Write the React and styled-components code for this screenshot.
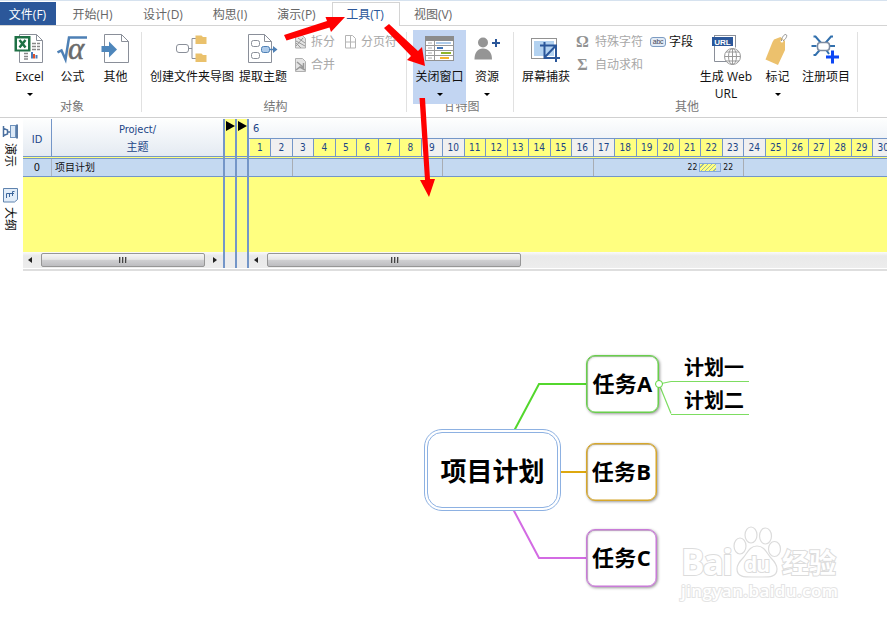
import React from 'react'
import styled, { createGlobalStyle, css } from 'styled-components'

const GlobalStyle = createGlobalStyle`
    * {
        box-sizing: border-box;
    }

    body {
        margin: 0;
        background: #fff;
        font: 12px/16px "Open Sans", "Noto Sans CJK SC", sans-serif;
        overflow: hidden;
    }
`

const blue = '#7496c8'
const yellow = '#ffff80'
const navy = '#1c4587'

const Window = styled.div`
    position: relative;
    width: 887px;
    height: 622px;
    display: flex;
    flex-direction: column;
    overflow: hidden;
    background: #fff;
`

/* ---------- ribbon tabs ---------- */

const TabBar = styled.div`
    display: flex;
    flex: none;
    height: 26px;
    padding-top: 2px;
    background: linear-gradient(#d6e2ef 1px, #fff 1px);
    border-bottom: 1px solid #d4d4d4;
`

const Tab = styled.div`
    width: ${({ $width }) => $width}px;
    height: 24px;
    padding-right: 1px;
    line-height: 25px;
    text-align: center;
    color: #666;

    ${({ $file }) => $file && css`
        height: 23px;
        margin-right: 2px;
        background: #2b579a;
        color: #fff;
    `}

    ${({ $active }) => $active && css`
        padding-right: 2px;
        line-height: 23px;
        background: #fff;
        border: 1px solid #d4d4d4;
        border-bottom: none;
        color: #2b579a;
    `}
`

/* ---------- ribbon ---------- */

const RibbonBar = styled.div`
    display: flex;
    flex: none;
    height: 92px;
    border-bottom: 1px solid #d0d0d0;
`

const Group = styled.div`
    display: flex;
    flex-direction: column;
    width: ${({ $width }) => $width}px;
    margin: 4px 0 3px;
    background: linear-gradient(#e1e1e1, #e1e1e1) right 2px / 1px 80px no-repeat;
`

const GroupItems = styled.div`
    display: flex;
    height: 74px;
    padding-left: ${({ $left }) => $left}px;
`

const GroupCaption = styled.div`
    height: 10px;
    padding-left: 2px;
    line-height: 5px;
    text-align: center;
    color: #777;
`

const BigButton = styled.div`
    position: relative;
    z-index: 1;
    display: flex;
    flex-direction: column;
    align-items: center;
    flex: none;
    width: ${({ $width }) => $width}px;
    height: 74px;
    padding-top: 3px;
    color: #111;
    text-align: center;
    background: ${({ $pressed }) => ($pressed ? '#c2d5f2' : 'transparent')};

    svg {
        flex: none;
    }
`

const ButtonLabel = styled.div`
    margin-top: 3px;
    line-height: 17px;
    white-space: pre;
`

const Caret = styled.div`
    margin-top: 8px;
    border: 3px solid transparent;
    border-top-color: #000;
    border-bottom: none;
`

const SmallColumn = styled.div`
    display: flex;
    flex-direction: column;
    flex: none;
    width: ${({ $width }) => $width}px;
    padding-left: ${({ $left = 0 }) => $left}px;
`

const SmallButton = styled.div`
    display: flex;
    align-items: center;
    gap: ${({ $gap = 3 }) => $gap}px;
    height: 23px;
    white-space: nowrap;
    color: ${({ $enabled }) => ($enabled ? '#111' : '#a8a8a8')};

    svg {
        flex: none;
    }
`

const Icon = ({ w = 32, h = 32, children }) => (
    <svg width={ w } height={ h } viewBox={ `0 0 ${w} ${h}` } fill="none">{ children }</svg>
)

const ExcelIcon = () => (
    <Icon>
        <path d="M5.500 1.500h17l6 6v22h-23z" fill="#fff" stroke="#8a8f99" />
        <path d="M22.500 1.500v6h6" stroke="#8a8f99" />
        <path d="M18 10.500h4M18 13.500h4M18 16.500h4M23 10.500h3M23 13.500h3M23 16.500h3M10 20.500h4M10 23.500h4M10 26h4" stroke="#888" strokeWidth="1.500" />
        <path d="M18 19v6.500" stroke="#4a7ebb" strokeWidth="2" />
        <path d="M20 21v4.500" stroke="#e0532c" strokeWidth="2" />
        <path d="M22.500 22v3.500" stroke="#4a7ebb" strokeWidth="2" />
        <rect x=".5" y="3" width="16" height="15.500" fill="#1e7145" />
        <rect x="3" y="5.500" width="11" height="11" fill="#fff" />
        <path d="M5.500 7l6 7.500M11.500 7l-6 7.500" stroke="#1e7145" strokeWidth="2.500" />
    </Icon>
)

const Radical = styled.svg`
    text {
        font: italic 31px "Liberation Serif", serif;
        fill: #6b6b6b;
        stroke: #6b6b6b;
        stroke-width: .5px;
    }
`

const FormulaIcon = () => (
    <Radical width="32" height="32" fill="none">
        <path d="M.5 19.500l4-2 4 9L12 4.500h18" stroke="#4e80b5" strokeWidth="2.500" />
        <text x="11" y="26">α</text>
    </Radical>
)

const OtherIcon = () => (
    <Icon>
        <path d="M4.500 1.500h17l7 7v21h-24z" fill="#fff" stroke="#8a8f99" />
        <path d="M21.500 1.500v7h7" stroke="#8a8f99" />
        <path d="M1.500 13H9V8.500l8 8-8 8V19H1.500z" fill="#4e86bb" />
    </Icon>
)

const FolderMapIcon = () => (
    <Icon>
        <rect x=".5" y="11.500" width="12" height="8" rx="2.500" stroke="#8a8f99" />
        <path d="M13 15.500h3M20 5.500h-4v20h4" stroke="#8a8f99" />
        <path d="M19.500 2.500h6l1.500 1.500h3.500v7h-11z" fill="#eac16c" />
        <path d="M19.500 20.500h6l1.500 1.500h3.500v7h-11z" fill="#eac16c" />
    </Icon>
)

const ExtractIcon = () => (
    <Icon>
        <path d="M1.500 1.500h16l7 7v21h-23z" fill="#fff" stroke="#8a8f99" />
        <path d="M17.500 1.500v7h7" stroke="#8a8f99" />
        <rect x="4.500" y="7.500" width="8" height="6" rx="2" stroke="#8a8f99" />
        <rect x="4.500" y="19.500" width="8" height="6" rx="2" stroke="#8a8f99" />
        <rect x="14.500" y="13.500" width="8" height="6" rx="2" fill="#aecbea" stroke="#4e80b5" />
        <path d="M22.500 16.500h5" stroke="#4e80b5" strokeWidth="1.500" />
        <path d="M26 13l4.500 3.500L26 20z" fill="#4e80b5" />
    </Icon>
)

const SplitIcon = () => (
    <Icon w={ 14 } h={ 14 }>
        <path d="M1.500.5h7l3 3v9.500h-10z" fill="#e4e4e4" stroke="#b0b0b0" />
        <path d="M2 6l9 5M2 11l7-8M4 3l7 5M2 8l5 5" stroke="#999" />
    </Icon>
)

const MergeIcon = () => (
    <Icon w={ 14 } h={ 14 }>
        <path d="M1.500.5h7l3 3v10h-10z" fill="#e4e4e4" stroke="#b0b0b0" />
        <path d="M3 4l6 5M9.500 5v4.500H5M2 12l4-3 5 3" stroke="#999" strokeWidth="1.500" />
    </Icon>
)

const PageBreakIcon = () => (
    <Icon w={ 14 } h={ 14 }>
        <path d="M1.500.5h7l3 3v9.500h-10zM6.500 1v12M1.500 7h10" stroke="#b4b4b4" />
    </Icon>
)

const GanttIcon = () => (
    <Icon>
        <rect x="1.500" y="3.500" width="28" height="24" fill="#fff" stroke="#929292" />
        <rect x="1" y="3" width="29" height="5" fill="#8c8c8c" />
        <path d="M10.500 8v19M2 12.500h28M2 17.500h28M2 22.500h28" stroke="#999" />
        <path d="M4 10h4M4 15h4M4 20h4M4 25h4" stroke="#aaa" />
        <path d="M12 10h15" stroke="#aecbea" strokeWidth="2" />
        <path d="M13 15h6" stroke="#3f73b5" strokeWidth="2" />
        <path d="M17 20h10" stroke="#8fb52b" strokeWidth="2" />
        <path d="M16 25h9" stroke="#f5b32c" strokeWidth="2" />
    </Icon>
)

const ResourceIcon = () => (
    <Icon>
        <circle cx="12" cy="9.500" r="5" fill="#959595" />
        <path d="M3.500 26.500c0-7 3-11 8.500-11s9 4 9 11z" fill="#959595" />
        <path d="M25 6v8M21 10h8" stroke="#2b579a" strokeWidth="2" />
    </Icon>
)

const CaptureIcon = () => (
    <Icon>
        <rect x="1.500" y="5.500" width="25" height="20" stroke="#929292" />
        <rect x="4" y="8" width="20" height="15" fill="#b3d2f0" />
        <path d="M10 12.500h16V29M14.500 9v16H30M14.500 24.500L25.500 13" stroke="#2b579a" strokeWidth="2" />
    </Icon>
)

const Symbol = styled.span`
    width: 15px;
    text-align: center;
    font: bold 16px/16px "Liberation Serif", serif;
    color: #929292;
`

const Field = styled.span`
    width: 16px;
    height: 10px;
    border: 1px solid #7d9cc2;
    border-radius: 3px;
    background: #e2ebf6;
    font: 7px/7px "Liberation Sans", sans-serif;
    text-align: center;
    letter-spacing: -.3px;
    color: #445;
`

const WebUrlIcon = () => (
    <Icon>
        <path d="M4.500 3v25.500h14M25.500 2.500v12M4 2.500h22" stroke="#8a8f99" />
        <rect x="2" y="4" width="21" height="9" fill="#2b579a" />
        <text x="12.500" y="11.500" textAnchor="middle" fill="#fff" fontSize="8" fontWeight="bold" fontFamily="Liberation Sans">URL</text>
        <circle cx="22.500" cy="23.500" r="8" fill="#fff" stroke="#999" />
        <path d="M14.500 23.500h16M22.500 15.500v16M16 19h13M16 28h13" stroke="#999" />
        <ellipse cx="22.500" cy="23.500" rx="4" ry="8" stroke="#999" />
    </Icon>
)

const TagIcon = () => (
    <Icon>
        <path d="M12 6.500l6.500-2.500 4.500 4v9L16 32 3.500 26.500 10.500 9z" fill="#ecc16d" />
        <circle cx="20" cy="8" r="1.500" fill="#fff" />
        <path d="M19.500 8c0-3 2.500-7 4.500-6.500 2 1-.5 5-3 6.500" stroke="#929292" />
    </Icon>
)

const RegisterIcon = () => (
    <Icon>
        <path d="M3.500 3.500h2l6 7M23 3.500h-2l-6 7M1.500 13h5M20 13h5M3.500 22h2l5-6M16 16.500l3 4.500" stroke="#3270ad" strokeWidth="2" />
        <rect x="7.500" y="9.500" width="12" height="8" rx="3" fill="#fff" stroke="#7c8ba1" strokeWidth="1.500" />
        <path d="M22.500 17.500v13M16 24h13" stroke="#0d47f5" strokeWidth="3" />
    </Icon>
)

const RibbonButton = ({ icon, label, width, caret, pressed }) => (
    <BigButton $width={ width } $pressed={ pressed }>
        { icon }
        <ButtonLabel>{ label }</ButtonLabel>
        { caret && <Caret /> }
    </BigButton>
)

const Ribbon = () => (
    <RibbonBar>
        <Group $width={ 142 }>
            <GroupItems $left={ 8 }>
                <RibbonButton width={ 43 } icon={ <ExcelIcon /> } label="Excel" caret />
                <RibbonButton width={ 43 } icon={ <FormulaIcon /> } label="公式" />
                <RibbonButton width={ 43 } icon={ <OtherIcon /> } label="其他" />
            </GroupItems>
            <GroupCaption>对象</GroupCaption>
        </Group>
        <Group $width={ 265 }>
            <GroupItems $left={ 5 }>
                <RibbonButton width={ 90 } icon={ <FolderMapIcon /> } label="创建文件夹导图" />
                <RibbonButton width={ 52 } icon={ <ExtractIcon /> } label="提取主题" />
                <SmallColumn $width={ 55 } $left={ 5 }>
                    <SmallButton><SplitIcon />拆分</SmallButton>
                    <SmallButton><MergeIcon />合并</SmallButton>
                </SmallColumn>
                <SmallColumn $width={ 58 }>
                    <SmallButton><PageBreakIcon />分页符</SmallButton>
                </SmallColumn>
            </GroupItems>
            <GroupCaption>结构</GroupCaption>
        </Group>
        <Group $width={ 107 }>
            <GroupItems $left={ 6 }>
                <RibbonButton width={ 53 } icon={ <GanttIcon /> } label="关闭窗口" caret pressed />
                <RibbonButton width={ 42 } icon={ <ResourceIcon /> } label="资源" caret />
            </GroupItems>
            <GroupCaption>甘特图</GroupCaption>
        </Group>
        <Group $width={ 344 }>
            <GroupItems $left={ 6 }>
                <RibbonButton width={ 52 } icon={ <CaptureIcon /> } label="屏幕捕获" />
                <SmallColumn $width={ 78 } $left={ 3 }>
                    <SmallButton $gap={ 5 }><Symbol>Ω</Symbol>特殊字符</SmallButton>
                    <SmallButton $gap={ 5 }><Symbol>Σ</Symbol>自动求和</SmallButton>
                </SmallColumn>
                <SmallColumn $width={ 46 }>
                    <SmallButton $enabled><Field>abc</Field>字段</SmallButton>
                </SmallColumn>
                <RibbonButton width={ 60 } icon={ <WebUrlIcon /> } label={ '生成 Web\nURL' } />
                <RibbonButton width={ 43 } icon={ <TagIcon /> } label="标记" caret />
                <RibbonButton width={ 54 } icon={ <RegisterIcon /> } label="注册项目" />
            </GroupItems>
            <GroupCaption>其他</GroupCaption>
        </Group>
    </RibbonBar>
)

/* ---------- side tabs ---------- */

const Workspace = styled.div`
    display: flex;
    flex: none;
    height: 153px;
`

const SideTabs = styled.div`
    display: flex;
    flex-direction: column;
    width: 23px;
    padding: 6px 0 0 2px;
`

const SideTab = styled.div`
    display: flex;
    flex-direction: column;
    align-items: flex-start;
    gap: 3px;
    height: 64px;

    span {
        writing-mode: vertical-rl;
        text-orientation: sideways;
        line-height: 16px;
        color: #111;
    }
`

/* ---------- gantt ---------- */

const Gantt = styled.div`
    display: flex;
    flex: 1;
    min-width: 0;
    height: 153px;
    padding-top: 1px;
    border-bottom: 2px solid #dedede;
    background: #fff;
    font-family: "DejaVu Sans Condensed", "DejaVu Sans", "Noto Sans CJK SC", sans-serif;
    font-size: 11px;
    color: ${navy};
`

const Pane = styled.div`
    display: flex;
    flex-direction: column;
    flex: ${({ $width }) => ($width ? 'none' : 1)};
    width: ${({ $width }) => ($width ? `${$width}px` : 'auto')};
    min-width: 0;
    height: 149px;
    overflow: hidden;
    background: ${yellow};
`

const NarrowPane = styled(Pane)`
    border-left: 2px solid ${blue};
`

const Head = styled.div`
    display: flex;
    flex: none;
    height: 38px;
    background: ${({ $plain }) => ($plain ? 'transparent' : 'linear-gradient(#fdfefe, #e4eaf2)')};
    border-bottom: 1px solid ${blue};
    margin-bottom: 1px;
`

const HeadCell = styled.div`
    display: flex;
    flex-direction: column;
    justify-content: center;
    align-items: center;
    width: ${({ $width }) => $width}px;
    padding-top: ${({ $single }) => ($single ? 5 : 2)}px;
    line-height: 18px;

    & + & {
        border-left: 1px solid ${blue};
    }
`

const Row = styled.div`
    display: flex;
    flex: none;
    height: 19px;
    line-height: 17px;
    border: solid ${blue};
    border-width: 1px 0;
    background: #c4d9f1;
    color: #111;
`

const RowCell = styled.div`
    width: ${({ $width }) => $width}px;
    padding: 0 3px;
    font-size: ${({ $id }) => ($id ? 11 : 10)}px;
    text-align: ${({ $id }) => ($id ? 'center' : 'left')};
    border-right: ${({ $id }) => ($id ? '1px solid #a9b4c2' : 'none')};
`

const ScrollBar = styled.div`
    display: flex;
    align-items: center;
    justify-content: ${({ $full }) => ($full ? 'space-between' : 'flex-start')};
    flex: none;
    height: 16px;
    margin-top: auto;
    padding: 0 6px 0 5px;
    background: linear-gradient(#fafafa, #e9e9e9 4px, #ededed);
`

const Arrow = styled.div`
    border: 3px solid transparent;
    border-right: ${({ $right }) => ($right ? 'none' : '4px solid #222')};
    border-left: ${({ $right }) => ($right ? '4px solid #222' : 'none')};
`

const Thumb = styled.div`
    display: flex;
    justify-content: center;
    align-items: center;
    gap: 2px;
    width: ${({ $width }) => $width}px;
    height: 14px;
    margin-left: ${({ $left = 0 }) => $left}px;
    border: 1px solid #969696;
    border-radius: 2px;
    background: linear-gradient(#f5f5f5, #e6e6e6 45%, #d0d0d2 50%, #bdbdc0);

    i {
        width: 1px;
        height: 6px;
        background: #444;
        box-shadow: 1px 0 #aaa;
    }
`

const Grip = (props) => (
    <Thumb { ...props }><i /><i /><i /></Thumb>
)

const Flag = styled.div`
    width: 0;
    height: 0;
    margin: 2px 0 0 1px;
    border: solid transparent;
    border-width: 5px 0 5px 9px;
    border-left-color: #000;
`

const Blank = styled.div`
    height: 16px;
    margin-top: auto;
    background: #ededed;
`

const Calendar = styled.div`
    display: flex;
    flex-direction: column;
    width: 100%;
`

const Month = styled.div`
    height: 20px;
    padding-left: 4px;
    line-height: 20px;
    border-bottom: 1px solid ${blue};
`

const Days = styled.div`
    display: flex;
    padding-left: .5px;
    height: 17px;
`

const Day = styled.div`
    flex: none;
    width: 21.5px;
    line-height: 17px;
    font-size: 10px;
    text-align: center;
    border-right: 1px solid ${blue};
    background: ${({ $off }) => ($off ? '#f0f0f0' : yellow)};
`

const Week = styled.div`
    display: flex;
    align-items: center;
    justify-content: flex-end;
    gap: 2px;
    flex: none;
    width: ${({ $width }) => $width}px;
    padding-right: 10px;
    font-size: 8.5px;
    border-right: 1px solid #a8adb4;
`

const Bar = styled.div`
    width: 22px;
    height: 9px;
    border: 1px solid #84a9dc;
    background:
        linear-gradient(90deg, transparent 16px, #c7d9ef 16px),
        repeating-linear-gradient(135deg, ${yellow} 0 2px, #9dbba0 2px 3px);
`

// days off are shown in grey, the rest in yellow
const daysOff = new Set([2, 3, 9, 10, 16, 17, 23, 24, 30])
const days = Array.from({ length: 30 }, (_, i) => i + 1)

const GanttPanel = () => (
    <Gantt>
        <Pane $width={ 200 }>
            <Head>
                <HeadCell $width={ 28 } $single>ID</HeadCell>
                <HeadCell $width={ 172 }>
                    <span>Project/</span>
                    <span>主题</span>
                </HeadCell>
            </Head>
            <Row>
                <RowCell $width={ 29 } $id>0</RowCell>
                <RowCell $width={ 171 }>项目计划</RowCell>
            </Row>
            <ScrollBar $full>
                <Arrow />
                <Grip $width={ 164 } />
                <Arrow $right />
            </ScrollBar>
        </Pane>
        { [0, 1].map(key => (
            <NarrowPane $width={ 12 } key={ key }>
                <Head $plain><Flag /></Head>
                <Row />
                <Blank />
            </NarrowPane>
        )) }
        <NarrowPane>
            <Head>
                <Calendar>
                    <Month>6</Month>
                    <Days>
                        { days.map(day => <Day key={ day } $off={ daysOff.has(day) }>{ day }</Day>) }
                    </Days>
                </Calendar>
            </Head>
            <Row>
                <Week $width={ 44 } />
                <Week $width={ 150 } />
                <Week $width={ 151 } />
                <Week $width={ 150 }>22<Bar />22</Week>
            </Row>
            <ScrollBar>
                <Arrow />
                <Grip $width={ 254 } $left={ 9 } />
            </ScrollBar>
        </NarrowPane>
    </Gantt>
)

/* ---------- mind map ---------- */

const Canvas = styled.div`
    position: relative;
    flex: 1;
    font-family: "Open Sans", "Noto Sans CJK SC", sans-serif;
    font-weight: bold;
    color: #000;

    > svg {
        display: block;
    }
`

const Node = styled.div`
    position: absolute;
    left: ${({ $x }) => $x}px;
    top: ${({ $y }) => $y}px;
    width: ${({ $w }) => $w}px;
    height: ${({ $h }) => $h}px;
    display: flex;
    align-items: center;
    justify-content: center;
    white-space: nowrap;
`

const Root = styled(Node)`
    border: 1px solid #8db1e2;
    border-radius: 18px;
    background: #fff;
    font-size: 26px;

    span {
        display: flex;
        align-items: center;
        justify-content: center;
        width: 131px;
        height: 76px;
        padding-top: 2px;
        border: 1px solid #8db1e2;
        border-radius: 15px;
    }
`

const Task = styled(Node)`
    padding-bottom: 2px;
    border: 1.500px solid ${({ $color }) => $color};
    border-radius: 9px;
    background: #fff;
    box-shadow: 1px 1px 3px rgba(0, 0, 0, .4), inset 1px 1px 2px rgba(0, 0, 0, .2), inset 0 0 0 .5px ${({ $color }) => $color};
    font-size: 22px;
    letter-spacing: .3px;
`

const Leaf = styled(Node)`
    padding: 2px 0 0 8px;
    border-bottom: 1.500px solid #7ddd61;
    font-size: 20px;
    line-height: 26px;
`

const Joint = styled(Node)`
    border: 1px solid #5cd63b;
    border-radius: 50%;
    background: #fff;
`

/* ---------- watermark ---------- */

const Watermark = styled.svg`
    position: absolute;
    left: 670px;
    top: 239px;
    fill: #fff;
    stroke: #dcdcdc;
    stroke-width: 1.2px;

    text {
        font-family: "Open Sans", "Noto Sans CJK SC", sans-serif;
        font-weight: bold;
        paint-order: stroke;
        stroke-width: 2px;
    }
`

const SiteName = styled.text`
    && {
        font-weight: 600;
        stroke: #e4e4e4;
    }
`

const MindMap = () => (
    <Canvas>
        <svg width="887" height="351" fill="none">
            <path d="M514 160l25-47h48" stroke="#53d72d" strokeWidth="2" />
            <path d="M560 201h27" stroke="#dea80f" strokeWidth="2" />
            <path d="M513 238l26 49h48" stroke="#d36be3" strokeWidth="2" />
            <path d="M659 113l12-2.500M659 113l12 29.500" stroke="#7ddd61" strokeWidth="1.200" />
        </svg>
        <Root $x={ 424 } $y={ 158 } $w={ 137 } $h={ 82 }><span>项目计划</span></Root>
        <Task $x={ 586 } $y={ 84 } $w={ 73 } $h={ 58 } $color="#68cf4b">任务A</Task>
        <Task $x={ 586 } $y={ 172 } $w={ 71 } $h={ 58 } $color="#d7a72b">任务B</Task>
        <Task $x={ 586 } $y={ 258 } $w={ 71 } $h={ 58 } $color="#c97bd8">任务C</Task>
        <Leaf $x={ 671 } $y={ 82 } $w={ 78 } $h={ 29 }>计划一</Leaf>
        <Leaf $x={ 671 } $y={ 115 } $w={ 78 } $h={ 29 }>计划二</Leaf>
        <Joint $x={ 655 } $y={ 109 } $w={ 8 } $h={ 8 } />
        <Watermark width="190" height="110">
            <text x="11" y="65" fontSize="35" textLength="52">Bai</text>
            <path d="M87 36c-8 0-10 8-14 12-4 4-6 7-6 11 0 9 9 8 20 8s20 1 20-8c0-4-2-7-6-11-4-4-6-12-14-12z" />
            <ellipse cx="70" cy="36" rx="6" ry="8" />
            <ellipse cx="81" cy="25" rx="6" ry="8" />
            <ellipse cx="95.500" cy="26" rx="6" ry="8" />
            <ellipse cx="104.500" cy="39" rx="6" ry="7.500" />
            <text x="74" y="62" fontSize="21" textLength="26">du</text>
            <text x="112" y="63" fontSize="27" textLength="54">经验</text>
            <SiteName x="11" y="87" fontSize="17" textLength="157">jingyan.baidu.com</SiteName>
        </Watermark>
    </Canvas>
)

/* ---------- red pointers drawn over the window ---------- */

const Pointers = styled.svg`
    position: absolute;
    left: 0;
    top: 0;
    z-index: 2;
    fill: #f00;
    pointer-events: none;
`

const App = () => (
    <Window>
        <GlobalStyle />
        <TabBar>
            <Tab $width={ 56 } $file>文件(F)</Tab>
            <Tab $width={ 70 }>开始(H)</Tab>
            <Tab $width={ 71 }>设计(D)</Tab>
            <Tab $width={ 63 }>构思(I)</Tab>
            <Tab $width={ 70 }>演示(P)</Tab>
            <Tab $width={ 68 } $active>工具(T)</Tab>
            <Tab $width={ 67 }>视图(V)</Tab>
        </TabBar>
        <Ribbon />
        <Workspace>
            <SideTabs>
                <SideTab>
                    <Icon w={ 16 } h={ 16 }>
                        <path d="M1.500 2v11M1.500 4.500l4 1.500v4l-4 1.500M5 8h5" stroke="#4a6f9f" strokeWidth="1.500" />
                        <rect x="8.500" y="1.500" width="5" height="12" fill="#dce9f7" stroke="#6f93bd" />
                        <path d="M15 .5v14" stroke="#234f87" strokeWidth="1.500" />
                    </Icon>
                    <span>演示</span>
                </SideTab>
                <SideTab>
                    <Icon w={ 16 } h={ 16 }>
                        <path d="M1.500.5h14v11l-3 2.500h-11z" fill="#e2edf9" stroke="#5f83ae" />
                        <path d="M4.500 10V5.500H12M7.500 9V5.500M10.500 8V3.500h2" stroke="#3d669b" />
                    </Icon>
                    <span>大纲</span>
                </SideTab>
            </SideTabs>
            <GanttPanel />
        </Workspace>
        <MindMap />
        <Pointers width="887" height="622">
            <path d="M284 35l43-14-1.500-4 19.500 0-14 15-1.500-4.500-43 13z" />
            <path d="M389 24l29 27 4-4 3 19-18-6 4-4-27-28z" />
            <path d="M419.500 98h5.500l5 81h5l-6 18-9-17h5z" />
        </Pointers>
    </Window>
)

export default App
